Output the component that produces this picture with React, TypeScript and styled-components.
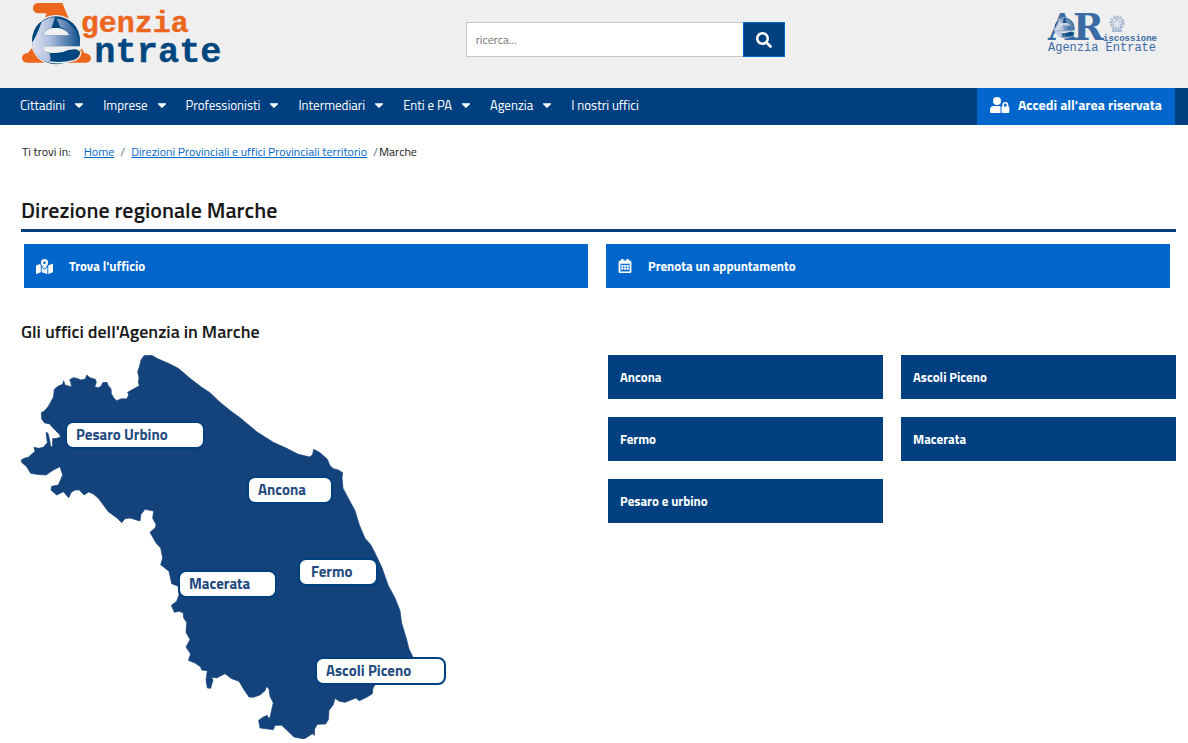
import React from "react";
import styled, { createGlobalStyle } from "styled-components";
import { FaCaretDown, FaMapMarkedAlt, FaRegCalendarAlt, FaSearch } from "react-icons/fa";

const navy = "#004080";
const blue = "#0066cc";

const GlobalStyle = createGlobalStyle`
  *, *::before, *::after { box-sizing: border-box; }
  body {
    margin: 0;
    background: #fff;
    color: #19191a;
    font-family: "Titillium Web", Roboto, "Liberation Sans", sans-serif;
  }
`;

const Header = styled.header`
  display: grid;
  grid-template-columns: 39.2% 26.9% 1fr;
  height: 88px;
  background: #efefef;
`;

const BrandLink = styled.a`
  display: block;
  height: 80px;
`;

const PartnerLink = styled.a`
  display: block;
  height: 60px;
  justify-self: end;
  padding-right: 24px;
`;

const SearchForm = styled.form`
  display: flex;
  height: 35px;
  margin-top: 22px;
`;

const SearchInput = styled.input`
  flex: 1;
  min-width: 0;
  padding: 0 9px;
  border: 1px solid #c8c8c8;
  border-right: 0;
  border-radius: 0;
  background: #fff;
  font: 400 12px/20px "Titillium Web", Roboto, sans-serif;
  &::placeholder { color: #757575; opacity: 1; }
`;

const SearchButton = styled.button`
  display: flex;
  align-items: center;
  justify-content: center;
  width: 42px;
  padding: 0;
  border: 1px solid ${blue};
  background: ${navy};
  color: #fff;
  font-size: 16px;
`;

const NavBar = styled.nav`
  display: flex;
  justify-content: space-between;
  height: 37px;
  padding-right: 13px;
  background: ${navy};
`;

const NavList = styled.ul`
  display: flex;
  margin: 0;
  padding: 6px 0 0 20px;
  list-style: none;
`;

const NavItem = styled.li`
  margin-right: 17px;
`;

const NavLink = styled.a`
  display: flex;
  align-items: center;
  gap: 7px;
  color: #fff;
  font-size: 13px;
  line-height: 22px;
  text-decoration: none;
  white-space: nowrap;
  svg { font-size: 14px; }
`;

const LoginLink = styled.a`
  display: flex;
  align-items: center;
  gap: 8px;
  padding: 0 13px 3px;
  background: ${blue};
  color: #fff;
  font-size: 14px;
  font-weight: 700;
  line-height: 20px;
  text-decoration: none;
  white-space: nowrap;
`;

const Main = styled.main`
  padding: 0 12px 0 21px;
`;

const Breadcrumb = styled.ol`
  display: flex;
  margin: 0;
  padding: 17px 0 0 1px;
  list-style: none;
  font-size: 12px;
  line-height: 20px;
  a { color: ${blue}; }
`;

const Crumb = styled.li<{ $lead?: boolean }>`
  margin-right: ${(p) => (p.$lead ? "13px" : "0")};
`;

const Slash = styled.span<{ $tight?: boolean }>`
  margin: ${(p) => (p.$tight ? "0 1px 0 6px" : "0 6px")};
  color: #5b6f82;
`;

const Title = styled.h1`
  margin: 33px 0 12px;
  padding-bottom: 4px;
  border-bottom: 3px solid ${navy};
  font-size: 22px;
  font-weight: 600;
  line-height: 30px;
`;

const Actions = styled.div`
  display: grid;
  grid-template-columns: 1fr 1fr;
  gap: 18px;
  padding: 0 6px 0 3px;
`;

const ActionLink = styled.a`
  display: flex;
  align-items: center;
  gap: 16px;
  height: 44px;
  padding: 0 12px;
  background: ${blue};
  color: #fff;
  font-size: 13px;
  font-weight: 700;
  line-height: 20px;
  text-decoration: none;
`;

const Subtitle = styled.h2`
  margin: 32px 0 11px;
  font-size: 18px;
  font-weight: 600;
  line-height: 24px;
`;

const Offices = styled.section`
  display: grid;
  grid-template-columns: 1fr 568px;
  gap: 18px;
  align-items: start;
`;

const OfficeList = styled.ul`
  display: grid;
  grid-template-columns: 1fr 1fr;
  gap: 18px;
  margin: 0;
  padding: 0;
  list-style: none;
`;

const OfficeLink = styled.a`
  display: flex;
  align-items: center;
  height: 44px;
  padding: 0 12px;
  background: ${navy};
  color: #fff;
  font-size: 13px;
  font-weight: 700;
  text-decoration: none;
`;

const MapCanvas = styled.div`
  position: relative;
  width: 425px;
  svg { display: block; }
`;

const MapPin = styled.a<{ $x: number; $y: number; $w: number; $indent?: number }>`
  position: absolute;
  left: ${(p) => p.$x}px;
  top: ${(p) => p.$y}px;
  width: ${(p) => p.$w}px;
  height: 28px;
  padding-left: ${(p) => p.$indent ?? 9}px;
  border: 2px solid ${navy};
  border-radius: 8px;
  background: #fff;
  color: #234a7f;
  font-size: 15px;
  font-weight: 700;
  line-height: 23px;
  text-decoration: none;
  white-space: nowrap;
`;

const MARCHE =
  "M33 346L42 340 55 337 68 325 75 320 72 307 85 310 100 307 112 293 108 262 114 265 119 285 122 306 128 303 128 281 140 280 152 276 148 268 130 250 118 236 104 234 95 222 94 203 104 197 115 184 130 157 133 133 145 123 158 118 161 107 165 120 185 126 182 112 179 104 190 98 200 100 212 105 226 102 230 90 240 98 256 103 259 112 254 125 265 128 274 123 278 113 291 112 295 122 303 131 304 146 312 160 320 167 335 161 350 162 356 150 353 142 370 132 388 122 385 112 387 98 383 80 388 66 393 45 402 32 425 31 445 42 475 55 505 70 540 100 575 127 600 143 630 172 665 200 690 218 740 260 790 292 830 310 865 328 900 336 908 328 911 313 930 323 952 343 960 362 970 371 985 375 998 383 996 400 999 430 1015 460 1035 497 1048 540 1065 580 1082 599 1095 624 1115 666 1135 722 1155 759 1170 797 1175 834 1190 884 1197 912 1210 939 1210 1015 1095 1019 1089 1029 1087 1046 1070 1057 1048 1067 1037 1059 1025 1064 1005 1072 988 1069 975 1060 970 1079 957 1096 955 1124 947 1137 922 1138 914 1152 913 1171 907 1166 892 1176 882 1182 852 1176 830 1155 815 1141 795 1141 790 1154 750 1149 746 1126 760 1116 772 1111 776 1121 781 1114 785 1094 790 1074 780 1054 777 1032 770 1024 765 1037 750 1050 730 1057 717 1056 702 1034 687 1009 665 1001 645 986 633 992 620 999 605 997 609 1006 605 1019 602 1030 592 1029 588 1004 592 977 575 975 572 966 555 954 535 946 542 927 528 906 540 884 528 862 530 832 521 819 520 804 508 799 493 802 484 781 500 769 507 749 505 724 485 716 477 679 452 659 458 639 452 609 438 594 420 562 436 548 438 538 428 520 431 498 405 493 393 508 390 528 360 519 345 521 335 533 320 518 295 500 265 460 250 447 236 441 222 450 208 435 195 435 184 442 176 458 160 440 140 450 123 435 125 424 145 420 158 390 150 365 130 375 108 390 80 388 62 385 50 365 36 353Z";

const pins = [
  { name: "Pesaro Urbino", x: 44, y: 66, w: 140 },
  { name: "Ancona", x: 226, y: 121, w: 86 },
  { name: "Macerata", x: 157, y: 215, w: 99 },
  { name: "Fermo", x: 277, y: 203, w: 80, indent: 11 },
  { name: "Ascoli Piceno", x: 294, y: 302, w: 131 },
];

const menu = ["Cittadini", "Imprese", "Professionisti", "Intermediari", "Enti e PA", "Agenzia"];
const offices = ["Ancona", "Ascoli Piceno", "Fermo", "Macerata", "Pesaro e urbino"];

const Globe = ({ id }: { id: string }) => (
  <g>
    <defs>
      <linearGradient id={id} x1="0" y1="0" x2="1" y2="0">
        <stop offset="0" stopColor="#dfe4f2" />
        <stop offset="0.35" stopColor="#b3c0de" />
        <stop offset="1" stopColor="#13508c" />
      </linearGradient>
    </defs>
    <circle cx="168" cy="121" r="76" fill="#efefef" />
    <circle cx="168" cy="121" r="72" fill="#00477f" />
    <path d="M125 66Q142 52 165 52L155 84Q134 88 128 106H206Q200 86 181 82L170 56Q196 56 212 75Q238 98 240 139H130Q132 156 150 160Q157 180 145 188Q102 172 96 128Q108 112 125 66Z" fill={`url(#${id})`} />
    <path d="M128 106Q136 83 166 83Q198 83 208 106Z" fill="#efefef" />
    <path d="M168 57L182 84H154Z" fill="#00477f" />
    <path d="M129 139H246Q246 150 240 152Q214 144 190 156Q150 164 134 152Q130 147 129 139Z" fill="#efefef" />
    <path d="M148 162Q186 161 214 150Q238 145 240 160Q236 184 190 187H150Q156 174 148 162Z" fill="#00477f" />
    <path d="M148 186Q183 192 222 182Q244 174 243 153" fill="none" stroke="#efefef" strokeWidth="4" />
  </g>
);

const AgencyLogo = () => (
  <svg width="240" height="80" viewBox="0 0 720 240" role="img" aria-label="Agenzia Entrate">
    <path d="M114 9H187L208 60H132L140 40H114Q99 38 99 24Q99 11 114 9Z" fill="#ec671d" />
    <path d="M95 145L84 159Q66 161 66 174Q68 188 80 188H260Q273 186 273 174Q271 160 252 159L244 141Z" fill="#ec671d" />
    <Globe id="agency-globe" />
    <g fontFamily="'Liberation Mono', monospace" fontWeight="700" strokeWidth="1">
      <text x="242" y="96" fontSize="90" fill="#ec671d" stroke="#ec671d">genzia</text>
      <text x="283" y="187" fontSize="106" fill="#00477f" stroke="#00477f">ntrate</text>
    </g>
  </svg>
);

const CollectionLogo = () => (
  <svg width="118" height="60" viewBox="0 0 118 60" role="img" aria-label="Agenzia Entrate Riscossione">
    <g fontFamily="'DejaVu Serif', serif" fontWeight="700" fontSize="37" fill="#3a6ba5">
      <text x="2" y="40">A</text>
      <text x="27" y="40">R</text>
    </g>
    <g fontFamily="'Liberation Mono', monospace" fill="#3a6ba5">
      <text x="57" y="41" fontSize="9" fontWeight="700">iscossione</text>
      <text x="2" y="51" fontSize="12">Agenzia Entrate</text>
    </g>
    <g transform="translate(-5 11) scale(0.14)" opacity="0.8">
      <Globe id="collection-globe" />
    </g>
    <g fill="none" stroke="#a7bad1">
      <circle cx="71" cy="23" r="6" strokeWidth="3" strokeDasharray="2 1" />
      <path d="M71 17L73 22H78L74 25L75 30L71 27L67 30L68 25L64 22H69Z" fill="#dce4ee" />
      <path d="M66 31H76" strokeWidth="2" />
    </g>
  </svg>
);

const UserLockIcon = () => (
  <svg width="20" height="16" viewBox="0 0 20 16" fill="currentColor" aria-hidden="true">
    <circle cx="7" cy="4" r="4" />
    <path d="M0 15V13Q0 9 4 9H9Q10 9 10.500 9.500V16H1Q0 16 0 15Z" />
    <path d="M11.500 9.500H12.300V8Q12.300 5 15.300 5Q18.300 5 18.300 8V9.500H19.300V15Q19.300 16 18.300 16H12.500Q11.500 16 11.500 15ZM14 9.500H16.600V8Q16.600 6.600 15.300 6.600Q14 6.600 14 8Z" fillRule="evenodd" />
  </svg>
);

export default function App() {
  return (
    <>
      <GlobalStyle />
      <Header>
        <BrandLink href="#"><AgencyLogo /></BrandLink>
        <SearchForm role="search">
          <SearchInput type="text" aria-label="Ricerca" placeholder="ricerca..." />
          <SearchButton type="button" aria-label="Cerca"><FaSearch /></SearchButton>
        </SearchForm>
        <PartnerLink href="#"><CollectionLogo /></PartnerLink>
      </Header>
      <NavBar>
        <NavList>
          {menu.map((m) => (
            <NavItem key={m}><NavLink href="#">{m}<FaCaretDown /></NavLink></NavItem>
          ))}
          <NavItem><NavLink href="#">I nostri uffici</NavLink></NavItem>
        </NavList>
        <LoginLink href="#"><UserLockIcon />Accedi all'area riservata</LoginLink>
      </NavBar>
      <Main>
        <Breadcrumb>
          <Crumb $lead>Ti trovi in:</Crumb>
          <Crumb><a href="#">Home</a><Slash>/</Slash></Crumb>
          <Crumb><a href="#">Direzioni Provinciali e uffici Provinciali territorio</a><Slash $tight>/</Slash></Crumb>
          <Crumb>Marche</Crumb>
        </Breadcrumb>
        <Title>Direzione regionale Marche</Title>
        <Actions>
          <ActionLink href="#"><FaMapMarkedAlt size={17} />Trova l'ufficio</ActionLink>
          <ActionLink href="#"><FaRegCalendarAlt size={14} strokeWidth={20} />Prenota un appuntamento</ActionLink>
        </Actions>
        <Subtitle>Gli uffici dell'Agenzia in Marche</Subtitle>
        <Offices>
          <MapCanvas>
            <svg width="425" height="384" viewBox="33 30 1275 1152" aria-hidden="true">
              <path d={MARCHE} fill="#14427b" stroke="#14427b" strokeWidth="2" strokeLinejoin="round" />
            </svg>
            {pins.map((p) => (
              <MapPin key={p.name} href="#" $x={p.x} $y={p.y} $w={p.w} $indent={p.indent}>{p.name}</MapPin>
            ))}
          </MapCanvas>
          <OfficeList>
            {offices.map((o) => (
              <li key={o}><OfficeLink href="#">{o}</OfficeLink></li>
            ))}
          </OfficeList>
        </Offices>
      </Main>
    </>
  );
}
